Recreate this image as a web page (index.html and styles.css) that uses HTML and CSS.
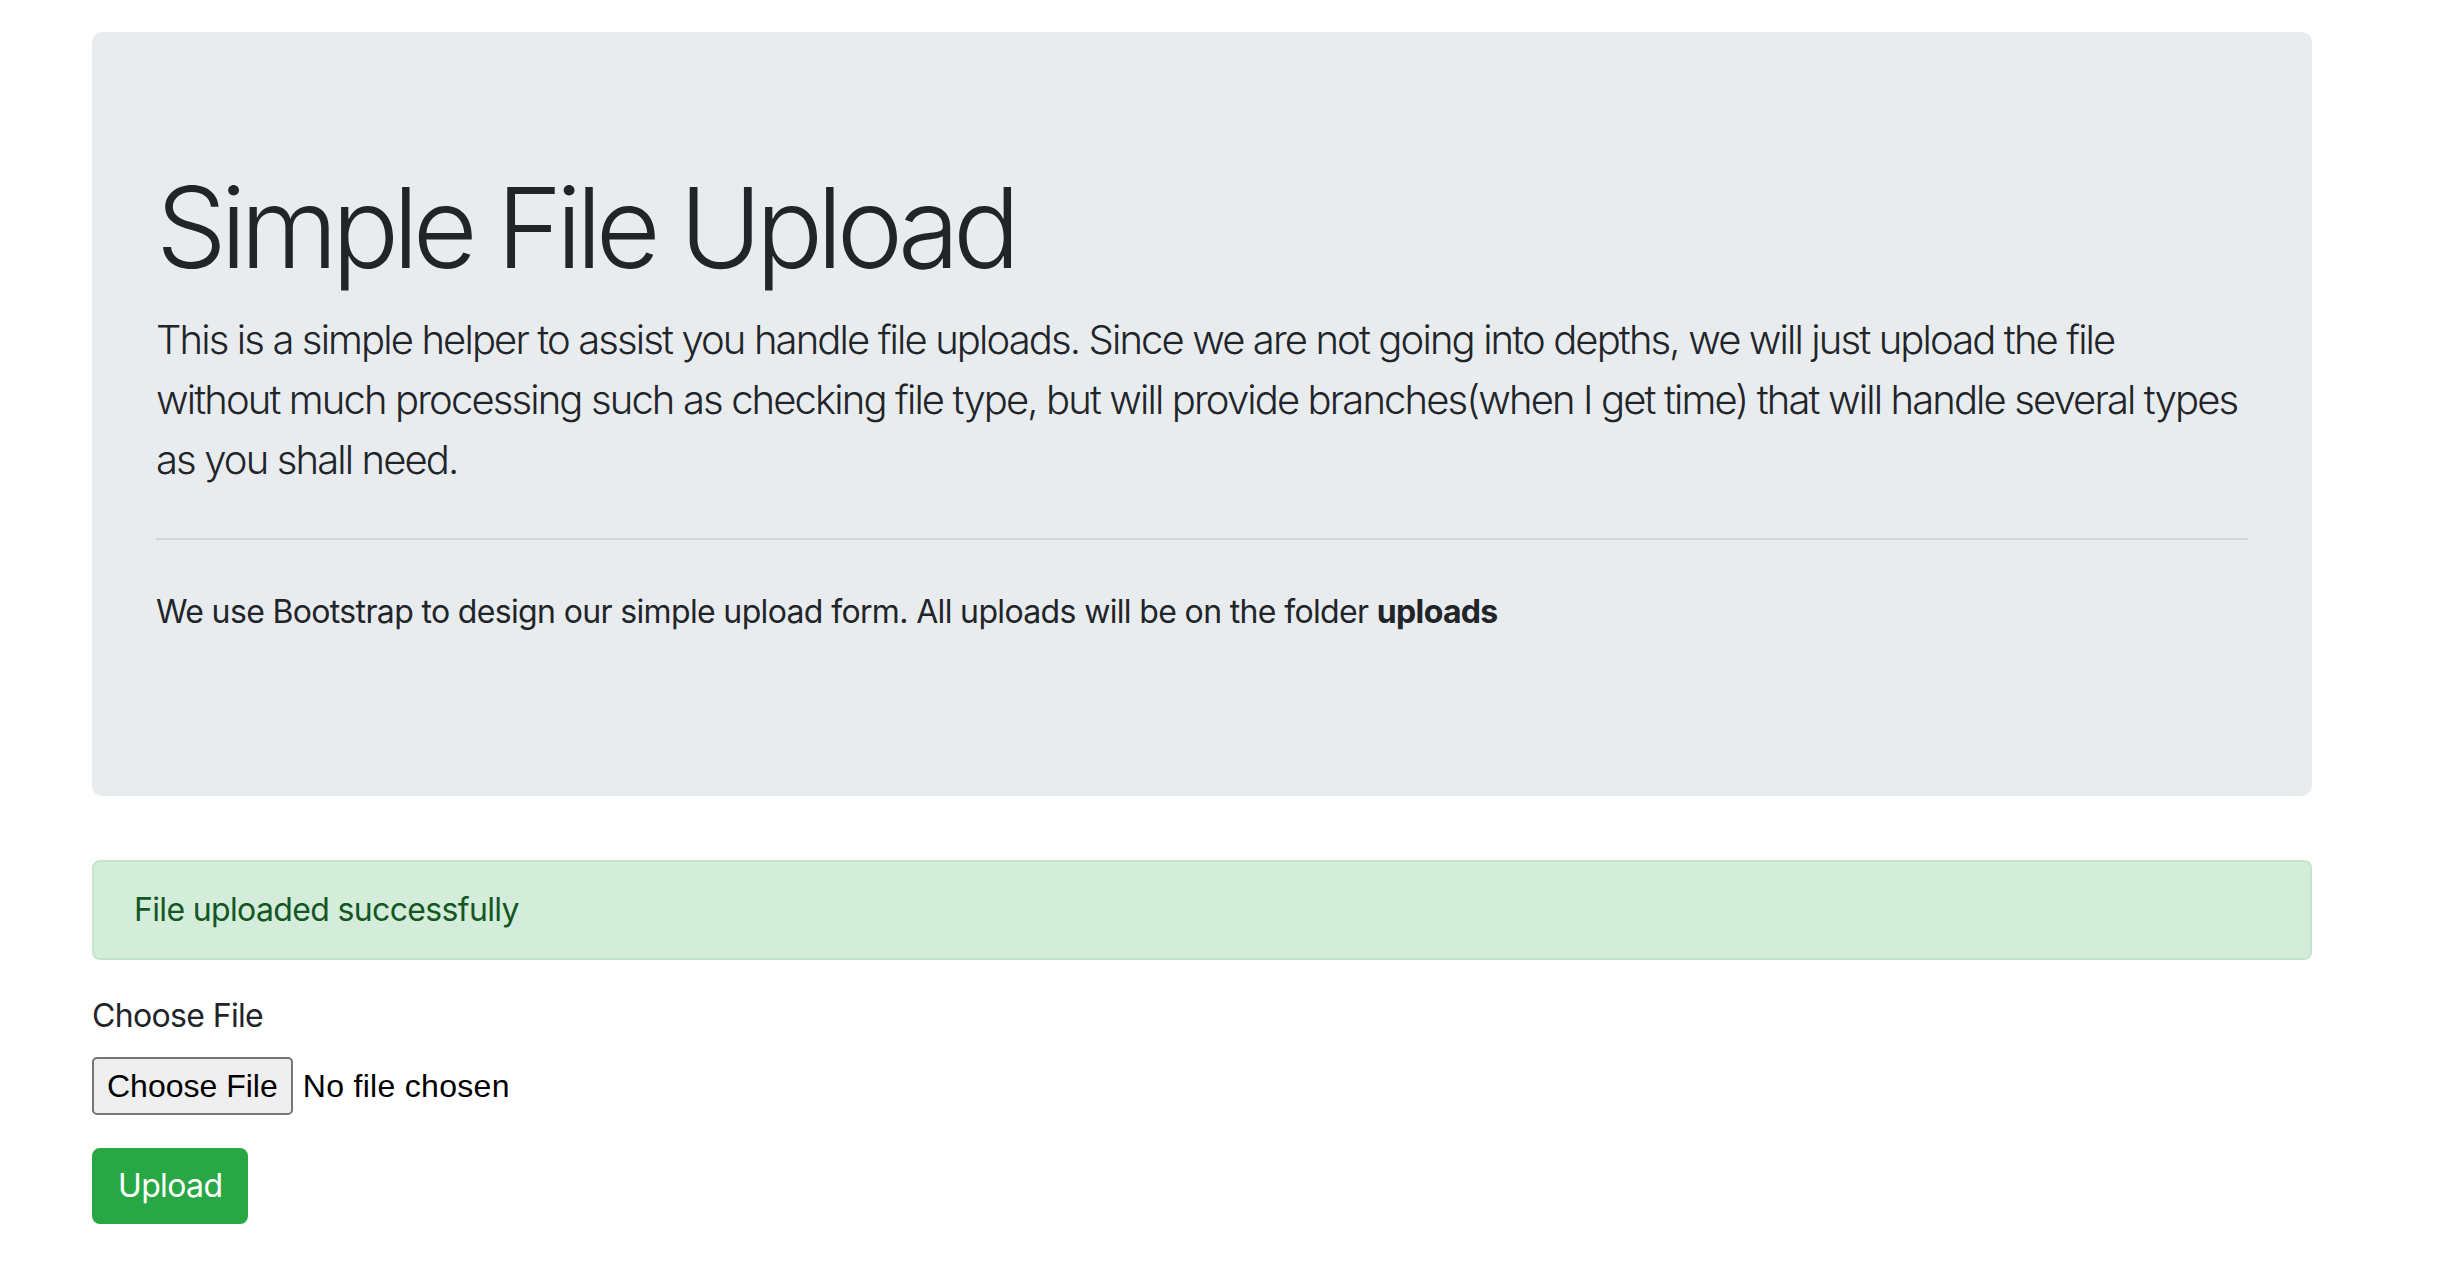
FILE: index.html
```html
<!DOCTYPE html>
<html lang="en">
<head>
<meta charset="utf-8">
<title>Simple File Upload</title>
<link rel="stylesheet" href="styles.css">
</head>
<body>
<div class="container">
  <div class="jumbotron">
    <h1 class="display">Simple File Upload</h1>
    <p class="lead">This is a simple helper to assist you handle file uploads. Since we are not going into depths, we will just upload the file<br>without much processing such as checking file type, but will provide branches(when I get time) that will handle several types as you shall need.</p>
    <hr class="divider">
    <p class="note">We use Bootstrap to design our simple upload form. All uploads will be on the folder <strong>uploads</strong></p>
  </div>
  <div class="alert">File uploaded successfully</div>
  <form class="upload-form">
    <div class="form-group">
      <label class="form-label">Choose File</label>
      <div class="file-input">
        <span class="file-btn">Choose File</span><span class="file-name">No file chosen</span>
      </div>
    </div>
    <button type="button" class="btn-success">Upload</button>
  </form>
</div>
</body>
</html>
```
FILE: styles.css
```css
html, body {
  margin: 0;
  padding: 0;
  background: #fff;
}
body {
  font-family: Inter, "Liberation Sans", sans-serif;
  font-size: 32px;
  line-height: 1.5;
  color: #212529;
  letter-spacing: -0.65px;
}
.container {
  width: 2220px;
  margin-left: 92px;
  padding-top: 32px;
}
.jumbotron {
  background: #e9ecef;
  border-radius: 10px;
  padding: 128px 64px;
  margin-bottom: 64px;
}
.display {
  margin: 0 0 16px;
  font-size: 112px;
  font-weight: 300;
  line-height: 1.2;
  letter-spacing: -6.3px;
}
.lead {
  margin: 0 0 32px;
  font-size: 40px;
  font-weight: 300;
  line-height: 1.5;
  letter-spacing: -1.88px;
}
.divider {
  margin: 48px 0;
  border: 0;
  border-top: 2px solid rgba(0,0,0,.1);
}
.note {
  margin: 0 0 32px;
}
.note strong {
  font-weight: 700;
}
.alert {
  background: #d4edda;
  border: 2px solid #c3e6cb;
  color: #155724;
  border-radius: 8px;
  padding: 24px 40px;
  margin-bottom: 32px;
}
.form-group {
  margin-bottom: 32px;
}
.form-label {
  display: inline-block;
  margin-bottom: 16px;
}
.file-input {
  display: flex;
  align-items: center;
  height: 60px;
  font-family: "Liberation Sans", Arial, sans-serif;
  font-size: 32px;
  letter-spacing: 0;
  color: #000;
}
.file-btn {
  box-sizing: border-box;
  height: 58px;
  display: inline-flex;
  align-items: center;
  padding: 0 13px;
  background: #efefef;
  border: 2px solid #767676;
  border-radius: 5px;
  margin-right: 10px;
}
.file-name {
  letter-spacing: 0.3px;
}
.btn-success {
  display: inline-block;
  font-family: inherit;
  font-size: 32px;
  line-height: 1.5;
  letter-spacing: -0.65px;
  color: #fff;
  background: #28a745;
  border: 2px solid #28a745;
  border-radius: 8px;
  padding: 12px 24px;
  cursor: pointer;
}
```
